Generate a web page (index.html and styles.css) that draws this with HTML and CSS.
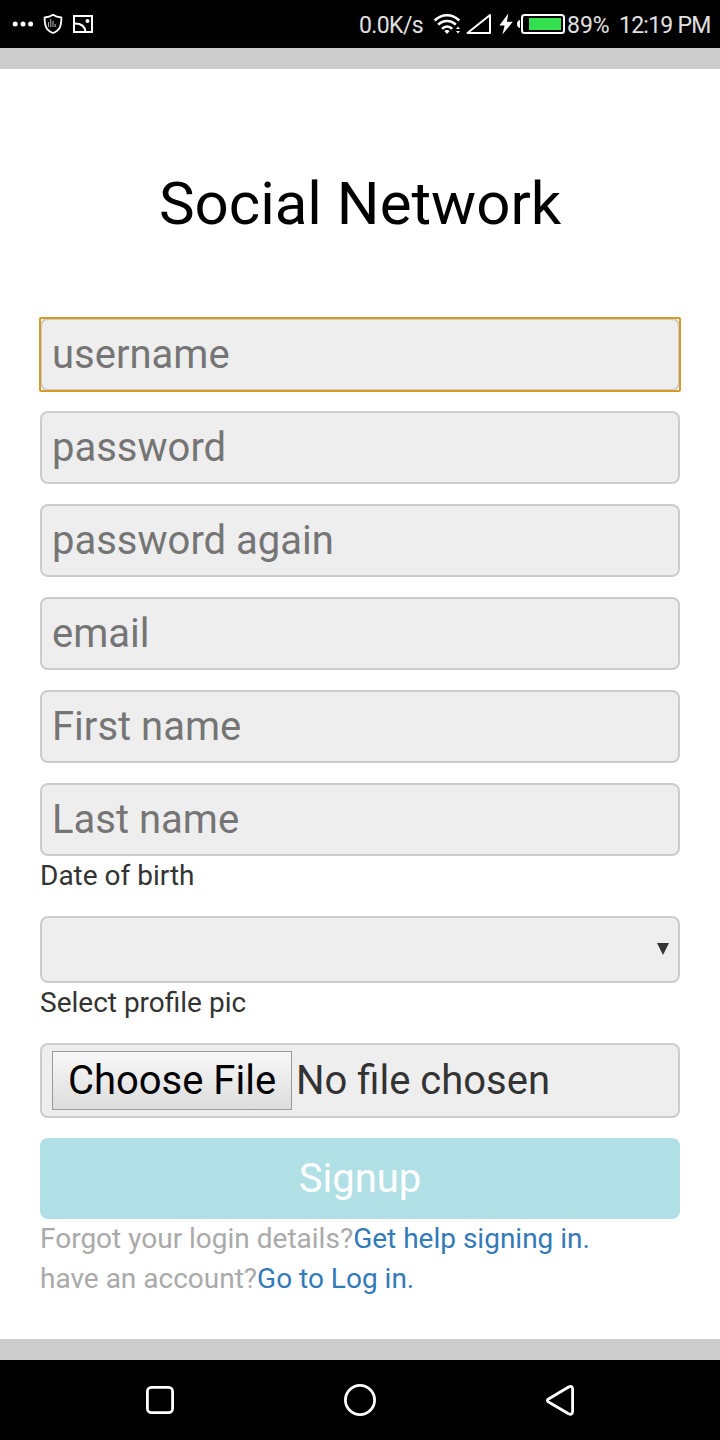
FILE: index.html
```html
<!DOCTYPE html>
<html lang="en">
<head>
<meta charset="utf-8">
<title>Social Network</title>
<link rel="stylesheet" href="styles.css">
</head>
<body>
<header class="status">
  <svg class="notices" width="96" height="48" viewBox="0 0 96 48">
    <g fill="#fff"><circle cx="15.2" cy="24" r="2.5"/><circle cx="23" cy="24" r="2.5"/><circle cx="30.6" cy="24" r="2.5"/></g>
    <path d="M53 14.8c-2.7 1.9-5.2 2.5-8.4 2.7.1 8.3 1.3 12.7 8.4 15.5 7.1-2.8 8.3-7.2 8.4-15.5-3.2-.2-5.7-.8-8.4-2.7z" fill="none" stroke="#fff" stroke-width="1.8" stroke-linejoin="round"/>
    <path d="M48.5 22v5M50.7 19v8M53 21v6M55.2 24v3" stroke="#aaa" stroke-width="1.1"/>
    <rect x="74" y="16" width="18" height="16" fill="none" stroke="#fff" stroke-width="2"/>
    <path d="M75 23.5c6 0 10 3 10.5 8.500" fill="none" stroke="#fff" stroke-width="2"/>
    <circle cx="87.5" cy="21" r="2" fill="#fff"/>
  </svg>
  <span class="speed">0.0K/s</span>
  <svg class="signals" width="136" height="48" viewBox="432 0 136 48">
    <g fill="none" stroke="#fff" stroke-width="2.6">
      <path d="M434.7 20.5c7-7 17.6-7 24.6 0M438.2 24.700c5-5 12.6-5 17.6 0M442 28.900c3-3 7.2-3 10.2 0" />
      <path d="M467.5 33H490V15z" stroke-width="2" stroke-linejoin="round"/>
      <rect x="522" y="15" width="42" height="18" rx="2.5" stroke-width="2"/>
    </g>
    <path d="M444.3 31.1q2.7-2 5.4 0L447 34zM456 29l2-2.4 2 2.4zM456 31l2 2.4 2-2.400zM508.3 13.5L499.3 25.4h5.3L502.4 34.5 512.8 21.8h-5.900zM520 20v8q-3-.5-3-4t3-4z" fill="#fff"/>
    <rect x="529" y="18" width="32" height="12" fill="#32e050"/>
  </svg>
  <span class="charge">89%</span>
  <span class="clock">12:19 PM</span>
</header>
<main class="page">
  <h1 class="title">Social Network</h1>
  <form class="form">
    <div class="field focused">username</div>
    <div class="field">password</div>
    <div class="field">password again</div>
    <div class="field">email</div>
    <div class="field">First name</div>
    <div class="field">Last name</div>
    <div class="label">Date of birth</div>
    <div class="field date"><svg width="12" height="12" viewBox="0 0 12 12"><path d="M0 0h12L6 12z" fill="#333"/></svg></div>
    <div class="label">Select profile pic</div>
    <div class="field file"><span class="choose">Choose File</span><span>No file chosen</span></div>
    <div class="signup">Signup</div>
    <p class="hint">Forgot your login details?<a class="link">Get help signing in.</a></p>
    <p class="hint">have an account?<a class="link">Go to Log in.</a></p>
  </form>
</main>
<nav class="nav">
  <svg width="720" height="80" viewBox="0 0 720 80" fill="none" stroke="#fff" stroke-width="2.8" stroke-linejoin="round">
    <rect x="147.4" y="27.4" width="25.2" height="25.2" rx="4"/>
    <circle cx="360" cy="40" r="14.6"/>
    <path d="M572.6 29v22.500q-.3 4-4 2.200L548.5 42q-2.400-1.500 0-3L568.6 27q3.700-2 4 2z"/>
  </svg>
</nav>
</body>
</html>
```
FILE: styles.css
```css
* { box-sizing: border-box; }
body {
  margin: 0;
  width: 720px;
  height: 1440px;
  display: flex;
  flex-direction: column;
  background: #ccc;
  font-family: Roboto, sans-serif;
}
.status {
  height: 48px;
  display: flex;
  align-items: center;
  background: #000;
  color: #e0e0e0;
  font-size: 23px;
  line-height: 44px;
  white-space: nowrap;
}
.status svg { display: block; flex: none; }
.status span { padding-top: 4px; }
.speed { margin-left: 263px; width: 73px; letter-spacing: -0.6px; }
.charge { width: 52px; margin-left: -1px; }
.clock { letter-spacing: -0.75px; }
.page {
  height: 1270px;
  margin: 21px 0;
  padding: 0 40px;
  background: #fff;
}
.title {
  margin: 0;
  height: 249px;
  padding-top: 100px;
  font-size: 60px;
  font-weight: 400;
  line-height: 70px;
  text-align: center;
  color: #000;
}
.form { display: flex; flex-direction: column; }
.field {
  height: 73px;
  margin-bottom: 20px;
  padding: 0 10px;
  border: 2px solid #ccc;
  border-radius: 8px;
  background: #eee;
  color: #757575;
  font-size: 40px;
  line-height: 69px;
}
.focused {
  position: relative;
}
.focused::after {
  content: "";
  position: absolute;
  inset: -3px;
  border: 2px solid #d59a23;
  border-radius: 2px;
}
.field:has(+ .label) { margin-bottom: 0; }
.label {
  height: 60px;
  font-size: 28px;
  line-height: 40px;
  color: #333;
}
.date {
  height: 67px;
  display: flex;
  align-items: center;
  justify-content: flex-end;
  padding: 0 9px 2px;
}
.file {
  height: 75px;
  display: flex;
  align-items: center;
  gap: 4px;
  color: #333;
}
.choose {
  width: 240px;
  height: 59px;
  border: 1px solid #999;
  background: linear-gradient(#f8f8f8, #ddd);
  color: #000;
  line-height: 57px;
  text-align: center;
}
.signup {
  height: 81px;
  border-radius: 8px;
  background: #b0e0e6;
  color: #fff;
  font-size: 40px;
  line-height: 81px;
  text-align: center;
}
.hint {
  margin: 0;
  font-size: 28px;
  line-height: 40px;
  color: #aaa;
}
.link { color: #337ab7; }
.nav { height: 80px; background: #000; }
.nav svg { display: block; }
```
